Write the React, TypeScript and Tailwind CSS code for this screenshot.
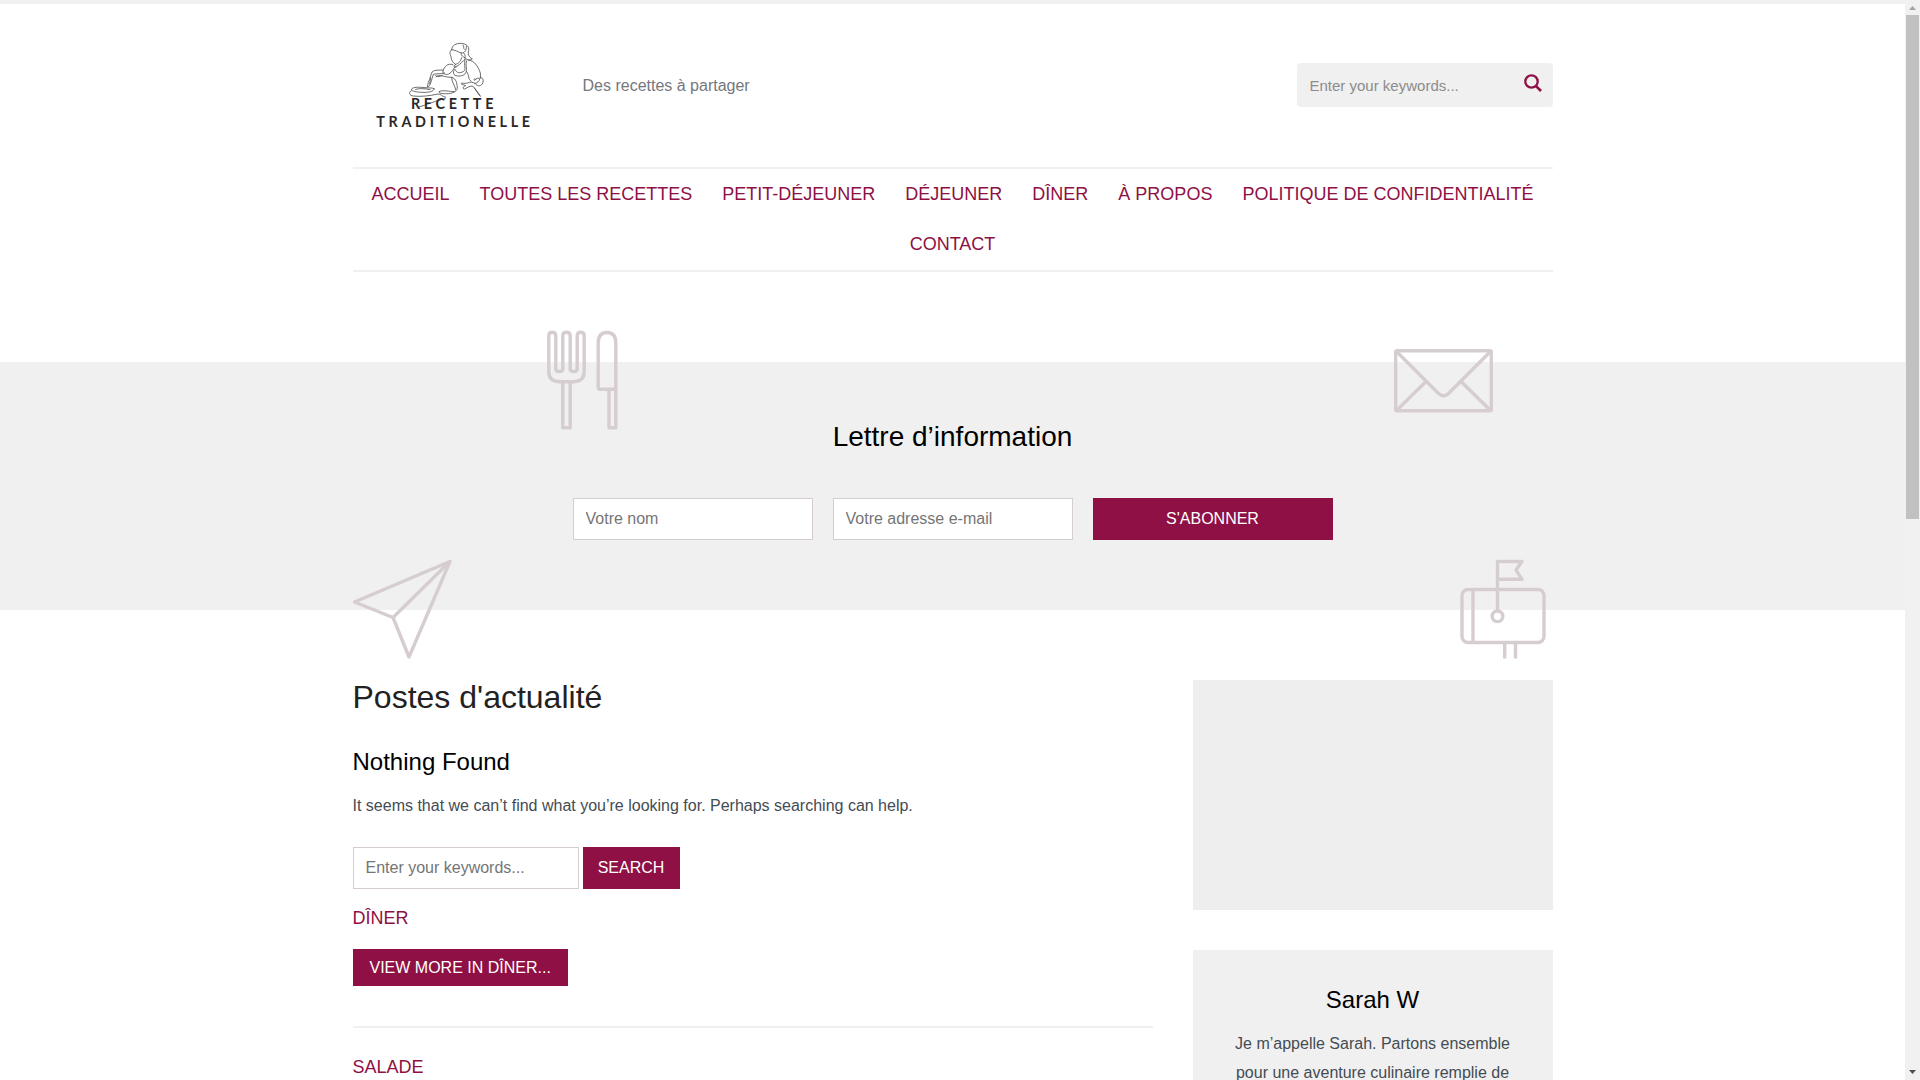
import type { ReactNode } from "react";

const navLinks = [
  "Accueil",
  "Toutes les recettes",
  "Petit-déjeuner",
  "Déjeuner",
  "Dîner",
  "À propos",
  "Politique de confidentialité",
  "Contact",
];

function Logo() {
  return (
    <svg
      className="h-[100px] w-[190px]"
      viewBox="38 106 570 300"
      fill="none"
      role="img"
      aria-label="Recette Traditionelle"
    >
      <g
        stroke="#4a4848"
        strokeWidth="2.4"
        strokeLinecap="round"
        strokeLinejoin="round"
      >
        {/* cap and hair */}
        <path d="M334 147C334 133 348 128 362 128C378 129 387 137 385 150C382 160 384 168 396 175C388 181 377 176 372 171M334 147C345 147 354 155 363 157C372 158 379 149 378 137M368 133C373 139 367 142 372 146M363 157C360 165 370 168 374 172C376 165 373 158 370 157" />
        {/* face and neck */}
        <path d="M334 147C326 152 329 160 332 168C333 180 338 187 346 191C355 188 360 184 364 171M346 191C337 198 341 204 350 197C360 190 367 182 374 176M374 176C370 194 378 206 370 212C358 219 348 217 345 207" />
        {/* left arm and sleeve */}
        <path d="M338 192C321 186 312 199 308 211C306 219 315 224 325 220C336 216 340 201 346 196M309 208C296 209 283 207 276 213C270 224 270 234 264 245L261 259C268 259 271 248 275 234L279 221C290 218 301 221 313 217M271 232L268 250" />
        {/* apron */}
        <path d="M342 207C337 217 338 224 352 226C364 227 373 224 377 215C382 206 373 190 379 180M287 228C296 219 313 230 334 230C349 235 349 247 351 260C351 272 340 275 331 278C315 280 295 280 296 273C306 267 328 273 342 273M334 230C333 244 344 253 346 267M286 225C294 231 298 227 306 224" />
        {/* right arm and hand */}
        <path d="M385 179C401 178 414 198 420 217L421 232C413 234 408 231 405 238C401 241 399 235 404 233M379 213C388 224 382 236 392 241M421 232C430 229 430 243 426 250C419 259 410 255 405 249C398 244 389 243 382 247C373 250 363 245 362 249C363 253 373 252 376 255C366 258 366 266 373 265C382 260 391 254 398 257C408 267 411 278 420 287M403 249C412 246 417 241 418 236M402 262L419 284" />
        {/* dish */}
        <path d="M281 264C282 273 264 276 244 275C228 274 211 272 214 265C217 259 237 259 254 261C266 263 276 260 281 264ZM214 268C205 275 205 284 219 286C240 289 270 285 288 281C304 278 300 286 315 289C322 294 308 293 300 298C281 302 257 313 236 319M226 266C240 262 257 264 269 267" />
      </g>
      <g
        fill="#2b2728"
        fontFamily="Lato, sans-serif"
        fontWeight="700"
        fontSize="43"
        letterSpacing="11"
      >
        <text x="212" y="324">
          RECETTE
        </text>
        <text x="108" y="380">
          TRADITIONELLE
        </text>
      </g>
    </svg>
  );
}

function SearchIcon() {
  return (
    <svg
      width="18"
      height="18"
      viewBox="0 0 18 18"
      fill="none"
      stroke="#8e1044"
      strokeWidth="2.3"
    >
      <circle cx="7.5" cy="7.5" r="6.2" />
      <path d="M11.8 11.8L17 17" strokeWidth="2.6" />
    </svg>
  );
}

function LineIcon({
  className,
  viewBox,
  children,
}: {
  className: string;
  viewBox: string;
  children: ReactNode;
}) {
  return (
    <svg
      className={className}
      viewBox={viewBox}
      fill="none"
      stroke="#d6cdd0"
      strokeWidth="3.4"
      strokeLinejoin="round"
      aria-hidden="true"
    >
      {children}
    </svg>
  );
}

function Header() {
  return (
    <header>
      <div className="flex h-[163px] items-center">
        <a href="#">
          <Logo />
        </a>
        <p className="ml-10 text-[#75777d]">Des recettes à partager</p>
        <form className="relative ml-auto w-64 pb-px">
          <input
            type="search"
            aria-label="Search"
            placeholder="Enter your keywords..."
            className="block h-11 w-full rounded bg-[#f0f0f0] pt-px pr-12 pl-[13px] text-[15px] placeholder:text-[#8c8c8c]"
          />
          <button
            type="button"
            aria-label="Search"
            className="absolute top-[11px] right-[11px]"
          >
            <SearchIcon />
          </button>
        </form>
      </div>
      <nav className="flex flex-wrap justify-center border-y-2 border-[#f0f0f0] pb-px">
        {navLinks.map((link) => (
          <a
            key={link}
            href="#"
            className="px-[15px] text-lg leading-[50px] text-[#8e1044] uppercase"
          >
            {link}
          </a>
        ))}
      </nav>
    </header>
  );
}

function Newsletter() {
  return (
    <section className="mt-[90px] bg-[#f0f0f0]">
      <div className="relative mx-auto h-[248px] max-w-[1200px] pt-[57px]">
        <LineIcon
          className="absolute -top-8 left-[194px] h-[100px] w-[71px]"
          viewBox="0 0 71 100"
        >
          <path d="M13 51.700H12Q1.800 51 1.800 42V6Q1.800 2.300 5.300 2.300T8.800 6V39Q8.800 41.500 12.300 41.500T15.800 39V6Q15.800 2.300 19.500 2.300T23.200 6V39Q23.200 41.500 26.700 41.500T30.200 39V6Q30.200 2.300 33.700 2.300T37.200 6V42Q37.200 51 27 51.700Z" />
          <path d="M15.800 52V97.700H23.200V52M51.200 57V13Q51.200 2.500 60 2.500T68.800 13V97.700H62V60M68.800 59.300H53Q51.200 59.300 51.200 57" />
        </LineIcon>
        <LineIcon
          className="absolute -top-[13px] right-[60px] h-16 w-[99px]"
          viewBox="0 0 99 64"
        >
          <rect x="1.700" y="1.700" width="95.600" height="60" rx="1.500" />
          <path d="M3 3L44.500 44.500Q49.500 49 54.500 44.500L96 3M3 61L32.500 32M96 61L66.500 32" />
        </LineIcon>
        <LineIcon
          className="absolute top-[198px] left-0 h-[100px] w-[99px]"
          viewBox="0 0 99 100"
        >
          <path d="M1.500 42L97 1.500L56 97L40 57.500ZM40 57.500L97 1.500" />
        </LineIcon>
        <LineIcon
          className="absolute top-[197px] right-[7px] h-[100px] w-[86px]"
          viewBox="0 0 86 100"
        >
          <rect x="2" y="30.500" width="82" height="53" rx="6" />
          <circle cx="37.500" cy="57.300" r="5.300" />
          <path d="M13 30V83M37.500 52V2.500H62L56 11L62 20.300H37.500M44.700 84V99.500M55.500 84V99.500" />
        </LineIcon>

        <h2 className="text-center text-[28px] leading-9 text-black">
          Lettre d’information
        </h2>
        <form className="mt-[43px] flex justify-center gap-5">
          <input
            type="text"
            aria-label="Votre nom"
            placeholder="Votre nom"
            className="h-[42px] w-60 border border-[#d6cdd0] bg-white px-3 placeholder:text-[#757575]"
          />
          <input
            type="email"
            aria-label="Votre adresse e-mail"
            placeholder="Votre adresse e-mail"
            className="h-[42px] w-60 border border-[#d6cdd0] bg-white px-3 placeholder:text-[#757575]"
          />
          <button
            type="button"
            className="h-[42px] w-60 bg-[#8e1044] text-white uppercase"
          >
            S'abonner
          </button>
        </form>
      </div>
    </section>
  );
}

function Posts() {
  return (
    <main className="min-w-0 flex-1">
      <h1 className="text-[32px] leading-[34px] text-[#222222]">
        Postes d'actualité
      </h1>
      <h2 className="mt-8 text-2xl leading-8 text-black">Nothing Found</h2>
      <p className="mt-[13px] leading-[29px]">
        It seems that we can’t find what you’re looking for. Perhaps searching
        can help.
      </p>
      <form className="mt-[27px] flex gap-1">
        <input
          type="search"
          aria-label="Search recipes"
          placeholder="Enter your keywords..."
          className="h-[42px] w-[226px] border border-[#d6cdd0] bg-white px-3 placeholder:text-[#757575]"
        />
        <button
          type="button"
          className="h-[42px] w-[97px] bg-[#8e1044] text-white uppercase"
        >
          Search
        </button>
      </form>
      <section className="mt-[13px] border-b-2 border-[#f0f0f0] pb-10">
        <h3 className="text-lg leading-8 text-[#8e1044] uppercase">
          <a href="#">Dîner</a>
        </h3>
        <a
          href="#"
          className="mt-[15px] block w-fit bg-[#8e1044] px-[17px] leading-[37px] text-white uppercase"
        >
          View more in Dîner...
        </a>
      </section>
      <section className="mt-[23px]">
        <h3 className="text-lg leading-8 text-[#8e1044] uppercase">
          <a href="#">Salade</a>
        </h3>
      </section>
    </main>
  );
}

function Sidebar() {
  return (
    <aside className="w-[360px] shrink-0">
      <div className="h-[230px] bg-[#eeeeee]" />
      <section className="mt-10 bg-[#f0f0f0] px-10 pt-[34px] pb-10 text-center">
        <h2 className="text-2xl leading-8 text-black">Sarah W</h2>
        <p className="mt-[13px] leading-[29px]">
          Je m’appelle Sarah. Partons ensemble pour une aventure culinaire
          remplie de
        </p>
      </section>
    </aside>
  );
}

function Scrollbar() {
  return (
    <div
      className="flex w-[15px] shrink-0 flex-col items-center bg-[#f1f1f1]"
      aria-hidden="true"
    >
      <svg width="15" height="15" viewBox="0 0 15 15" fill="#a3a3a3">
        <path d="M4 10L7.500 6L11 10Z" />
      </svg>
      <div className="flex w-full flex-1 flex-col px-px">
        <div className="h-[48%] bg-[#c1c1c1]" />
      </div>
      <svg width="15" height="15" viewBox="0 0 15 15" fill="#505050">
        <path d="M4 5L7.500 9L11 5Z" />
      </svg>
    </div>
  );
}

export default function App() {
  return (
    <div className="flex h-screen bg-white font-['Liberation_Sans',Arial,sans-serif] text-base text-[#444c54]">
      <div className="min-w-0 flex-1 overflow-hidden border-t-4 border-[#f0f0f0]">
        <div className="mx-auto max-w-[1200px]">
          <Header />
        </div>
        <Newsletter />
        <div className="mx-auto mt-[70px] flex max-w-[1200px] gap-10">
          <Posts />
          <Sidebar />
        </div>
      </div>
      <Scrollbar />
    </div>
  );
}
